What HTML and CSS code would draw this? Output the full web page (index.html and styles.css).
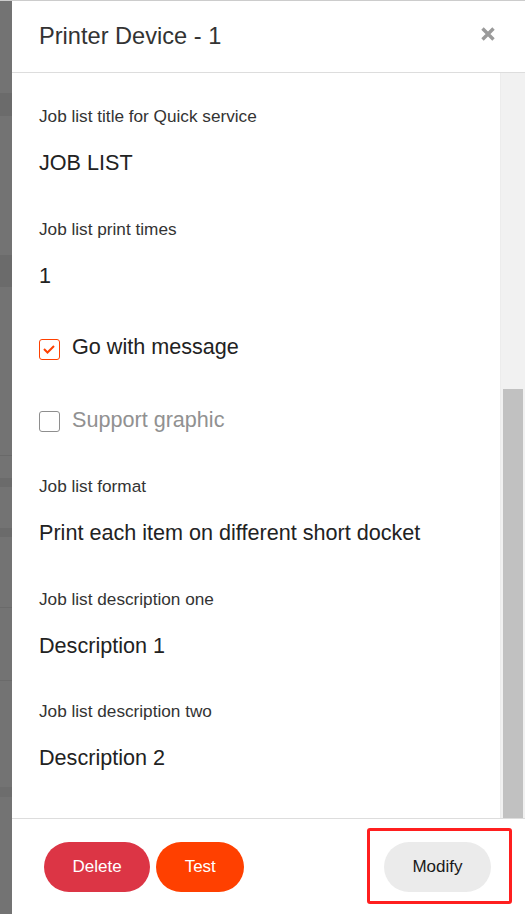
FILE: index.html
```html
<!DOCTYPE html>
<html lang="en">
<head>
	<meta charset="UTF-8">
	<title>Printer Device - 1</title>
	<link rel="stylesheet" href="styles.css">
</head>
<body>
	<div class="screen">
		<div class="backdrop"></div>
		<div class="modal">
			<div class="modal-header">
				<h4 class="modal-title">Printer Device - 1</h4>
				<button class="close" type="button">
					<svg width="16" height="14" viewBox="0 0 16 14">
						<path d="M2.5 1.5 L13.5 12.5 M13.5 1.5 L2.5 12.5" stroke="#9a9a9a" stroke-width="3.4" fill="none"/>
					</svg>
				</button>
			</div>
			<div class="modal-body">
				<div class="body-content">
					<div class="field">
						<div class="field-label">Job list title for Quick service</div>
						<div class="field-value">JOB LIST</div>
					</div>
					<div class="field">
						<div class="field-label">Job list print times</div>
						<div class="field-value">1</div>
					</div>
					<div class="check-row">
						<span class="check-box checked">
							<svg width="21" height="21" viewBox="0 0 21 21">
								<polyline points="5,10 8.5,13.5 15,7" stroke="#ff4000" stroke-width="2" fill="none"/>
							</svg>
						</span>
						<span class="check-text">Go with message</span>
					</div>
					<div class="check-row">
						<span class="check-box"></span>
						<span class="check-text off">Support graphic</span>
					</div>
					<div class="field">
						<div class="field-label">Job list format</div>
						<div class="field-value">Print each item on different short docket</div>
					</div>
					<div class="field">
						<div class="field-label">Job list description one</div>
						<div class="field-value">Description 1</div>
					</div>
					<div class="field">
						<div class="field-label">Job list description two</div>
						<div class="field-value">Description 2</div>
					</div>
				</div>
				<div class="scrollbar">
					<div class="scrollbar-thumb"></div>
				</div>
			</div>
			<div class="modal-footer">
				<div class="btn-left">
					<button class="btn btn-delete" type="button">Delete</button>
					<button class="btn btn-test" type="button">Test</button>
				</div>
				<span class="mark">
					<button class="btn btn-modify" type="button">Modify</button>
					<span class="mark-box"></span>
				</span>
			</div>
		</div>
	</div>
</body>
</html>
```
FILE: styles.css
```css
*{
	margin:0;
	padding:0;
	box-sizing: border-box;
}
body{
	font-family: "Liberation Sans", Arial, sans-serif;
	color:#222;
	overflow: hidden;
}
.screen{
	display: flex;
	height: 100vh;
	border-top:1px solid #cccccc;
}
.backdrop{
	width: 12px;
	flex-shrink: 0;
	background: #737373 linear-gradient(to bottom,
		transparent 92px, #6b6b6b 92px, #6b6b6b 115px, transparent 115px,
		transparent 254px, #6b6b6b 254px, #6b6b6b 286px, transparent 286px,
		transparent 454px, #696969 454px, #696969 455px, transparent 455px,
		transparent 477px, #6b6b6b 477px, #6b6b6b 486px, transparent 486px,
		transparent 527px, #6b6b6b 527px, #6b6b6b 536px, transparent 536px,
		transparent 606px, #6a6a6a 606px, #6a6a6a 607px, transparent 607px,
		transparent 679px, #6a6a6a 679px, #6a6a6a 680px, transparent 680px,
		transparent 786px, #6d6d6d 786px, #6d6d6d 796px, transparent 796px);
}
.modal{
	flex: 1;
	display: flex;
	flex-direction: column;
	background: #fff;
	min-width: 0;
}
.modal-header{
	height: 72px;
	flex-shrink: 0;
	display: flex;
	align-items: center;
	justify-content: space-between;
	padding:0 29px 0 27px;
	border-bottom:1px solid #dddddd;
}
.modal-title{
	font-size: 23.6px;
	font-weight: normal;
	color:#333;
}
.close{
	width: 16px;
	height: 14px;
	margin-bottom: 6px;
	border:none;
	background: none;
	display: flex;
}
.modal-body{
	flex: 1;
	display: flex;
	min-height: 0;
}
.body-content{
	flex: 1;
	overflow: hidden;
	padding:31px 0 0 27px;
}
.scrollbar{
	width: 25px;
	flex-shrink: 0;
	display: flex;
	flex-direction: column;
	justify-content: flex-end;
	padding:0 2px;
	background: #f1f1f1;
	border-left:1px solid #ececec;
}
.scrollbar-thumb{
	height: 429px;
	background: #c1c1c1;
}
.field{
	margin-bottom: 39.5px;
}
.field-label{
	font-size: 17.2px;
	line-height: 24px;
	color:#333;
	margin-bottom: 21px;
}
.field-value{
	font-size: 21.6px;
	line-height: 28px;
	color:#222;
}
.check-row{
	display: flex;
	align-items: center;
	height: 36px;
	margin-bottom: 36.5px;
}
.check-box{
	width: 21px;
	height: 21px;
	margin-top: 4px;
	margin-right: 12px;
	border:1px solid #8e8e8e;
	border-radius: 3px;
	display: flex;
	align-items: center;
	justify-content: center;
}
.check-box.checked{
	border-color: #ff4000;
}
.check-box svg{
	margin:-1px;
}
.check-text{
	font-size: 21.6px;
	color:#222;
}
.check-text.off{
	color:#919191;
}
.modal-footer{
	height: 96px;
	flex-shrink: 0;
	display: flex;
	align-items: center;
	justify-content: space-between;
	padding:0 34px 0 32px;
	border-top:1px solid #dddddd;
}
.btn-left{
	display: flex;
	gap: 6px;
}
.btn{
	height: 50px;
	padding:0 28.5px;
	border:none;
	border-radius: 25px;
	font-family: "Liberation Sans", Arial, sans-serif;
	font-size: 17px;
	color:#fff;
}
.btn-delete{
	background: #dc3545;
}
.btn-test{
	background: #ff4000;
}
.btn-modify{
	background: #ebebeb;
	color:#1a1a1a;
}
.mark{
	position: relative;
	display: flex;
}
.mark-box{
	position: absolute;
	top:-14px;
	left:-17px;
	right:-21px;
	bottom:-12px;
	border:3px solid #ff1f1f;
	border-radius: 3px;
}
```
